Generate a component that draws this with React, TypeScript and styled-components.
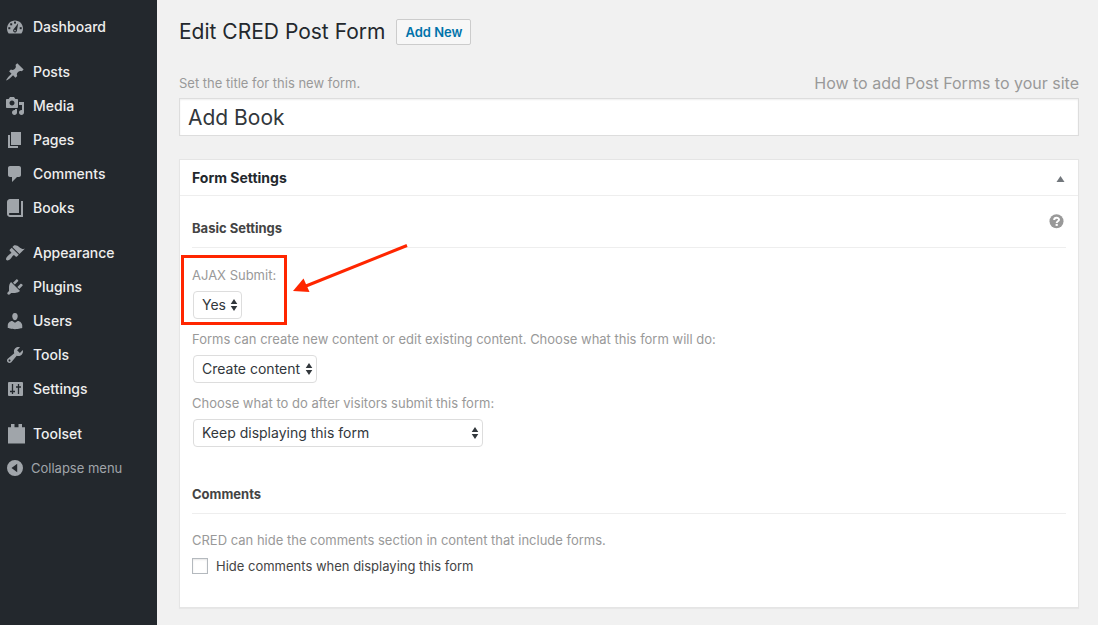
import React from "react";
import styled, { createGlobalStyle } from "styled-components";

const GlobalStyle = createGlobalStyle`
  *, *::before, *::after { box-sizing: border-box; }
  body {
    margin: 0;
    background: #f1f1f1;
    color: #444;
    font-family: Inter, Roboto, sans-serif;
    font-size: 13px;
    line-height: 20px;
  }
`;

const Shell = styled.div`
  display: flex;
  min-height: 100vh;
`;

const Sidebar = styled.nav`
  flex: 0 0 157px;
  padding-top: 10px;
  background: #23282d;
`;

const MenuGroup = styled.ul`
  list-style: none;
  margin: 0 0 11px;
  padding: 0;

  &:last-of-type { margin-bottom: 0; }
`;

const MenuLink = styled.a`
  display: flex;
  align-items: center;
  gap: 8px;
  height: 34px;
  padding-left: 5px;
  color: #eee;
  font-size: 14px;
  font-weight: 500;
  text-decoration: none;
`;

const CollapseButton = styled.button`
  display: flex;
  align-items: center;
  gap: 6px;
  width: 100%;
  height: 34px;
  padding: 0 0 0 5px;
  border: 0;
  background: none;
  color: #a0a5aa;
  font: inherit;
  cursor: pointer;
`;

const IconSvg = styled.svg`
  flex: none;
  width: 20px;
  height: 20px;
  fill: #a0a5aa;
`;

const Main = styled.main`
  flex: 1;
  min-width: 0;
  padding: 16px 19px 17px 22px;
`;

const TitleRow = styled.header`
  display: flex;
  align-items: center;
  gap: 11px;
  height: 32px;
`;

const PageTitle = styled.h1`
  margin: 0;
  color: #23282d;
  font-size: 21px;
  font-weight: 400;
  line-height: 32px;
`;

const AddNew = styled.a`
  height: 26px;
  padding: 0 8px;
  border: 1px solid #ccc;
  border-radius: 2px;
  background: #f7f7f7;
  color: #0073aa;
  font-weight: 600;
  line-height: 24px;
  text-decoration: none;
`;

const TitleHints = styled.div`
  display: flex;
  align-items: center;
  justify-content: space-between;
  height: 30px;
  margin-top: 20px;
  color: #999;
`;

const HelpLink = styled.a`
  color: #999;
  font-size: 16px;
  text-decoration: none;
`;

const TitleInput = styled.input`
  display: block;
  width: 100%;
  height: 38px;
  padding: 0 8px;
  border: 1px solid #ddd;
  border-radius: 0;
  background: #fff;
  box-shadow: inset 0 1px 2px rgba(0, 0, 0, 0.07);
  color: #32373c;
  font: inherit;
  font-size: 21px;
`;

const Panel = styled.section`
  margin-top: 23px;
  border: 1px solid #e5e5e5;
  background: #fff;
  box-shadow: 0 1px 1px rgba(0, 0, 0, 0.04);
`;

const PanelHeader = styled.div`
  display: flex;
  align-items: center;
  justify-content: space-between;
  height: 36px;
  padding: 0 12px;
  border-bottom: 1px solid #eee;
`;

const PanelTitle = styled.h2`
  margin: 0;
  color: #23282d;
  font-size: 14px;
  font-weight: 700;
`;

const IconButton = styled.button`
  display: flex;
  padding: 0;
  border: 0;
  background: none;
  cursor: pointer;
`;

const PanelBody = styled.div`
  padding: 16px 12px 31px;
`;

const SectionHeader = styled.div`
  display: flex;
  align-items: flex-start;
  justify-content: space-between;
  height: 36px;
  margin-bottom: 17px;
  border-bottom: 1px solid #eee;
`;

const SectionTitle = styled.h3`
  margin: 6px 0 0;
  font-size: 13px;
  font-weight: 700;
`;

const Field = styled.div`
  position: relative;
  display: flex;
  flex-direction: column;
  align-items: flex-start;
  gap: 6px;
  margin-bottom: 10px;
`;

const Hint = styled.label`
  color: #999;
`;

const SelectWrap = styled.div<{ $width: number }>`
  position: relative;
  width: ${(p) => p.$width}px;
  margin-left: 1px;
`;

const Select = styled.select`
  appearance: none;
  display: block;
  width: 100%;
  height: 28px;
  padding: 0 0 0 8px;
  border: 1px solid #ddd;
  border-radius: 4px;
  background: #fff;
  color: #32373c;
  font: inherit;
  font-size: 14px;
`;

const SelectArrows = styled.svg`
  position: absolute;
  top: 8px;
  right: 4px;
  width: 8px;
  height: 12px;
  fill: #32373c;
  pointer-events: none;
`;

const Highlight = styled.div`
  position: absolute;
  top: -10px;
  left: -11px;
  width: 106px;
  height: 70px;
  border: 3px solid #ff2600;
  pointer-events: none;
`;

const Arrow = styled.svg`
  position: absolute;
  top: -22px;
  left: 100px;
  width: 118px;
  height: 52px;
  pointer-events: none;
`;

const CommentsSection = styled.div`
  margin-top: 31px;
`;

const Paragraph = styled.p`
  margin: 0 0 7px;
  color: #999;
  line-height: 18px;
`;

const CheckLabel = styled.label`
  display: flex;
  align-items: center;
  gap: 8px;
`;

const Checkbox = styled.input`
  appearance: none;
  width: 16px;
  height: 16px;
  margin: 0;
  border: 1px solid #b4b9be;
  background: #fff;
  box-shadow: inset 0 1px 2px rgba(0, 0, 0, 0.1);
`;

const icons: Record<string, React.ReactNode> = {
  Dashboard: (
    <>
      <path d="M3.7 16.6C2.6 15.200 2 13.500 2 11.600 2 7.200 5.600 3.600 10 3.600s8 3.600 8 8c0 1.900-.6 3.600-1.700 5z" />
      <g fill="#23282d">
        <rect x="9" y="4.600" width="2" height="2" />
        <rect x="5.200" y="6.300" width="2" height="2" />
        <rect x="3.300" y="10.200" width="2" height="2" />
        <rect x="14.700" y="10.200" width="2" height="2" />
        <path d="M13.200 6.200l-1.300 7.600a1.900 1.900 0 1 1-3.300-1.500z" />
      </g>
      <circle cx="10" cy="13.600" r=".8" />
    </>
  ),
  Posts: (
    <path d="M10.440 3.020l1.820-1.820 6.360 6.350-1.830 1.820c-1.050-.68-2.480-.57-3.410.36l-.75.75c-.92.93-1.040 2.350-.35 3.410l-1.830 1.820-2.410-2.410-2.800 2.790c-.42.42-3.380 2.710-3.800 2.290s1.860-3.390 2.280-3.810l2.790-2.790L4.100 9.360l1.830-1.820c1.050.69 2.480.57 3.400-.36l.75-.75c.93-.92 1.050-2.350.36-3.410z" />
  ),
  Media: (
    <path d="M13 11V4c0-.55-.45-1-1-1h-1.670L9 1H5L3.670 3H2c-.55 0-1 .45-1 1v7c0 .55.45 1 1 1h10c.55 0 1-.45 1-1zM7 4.500c1.380 0 2.500 1.120 2.500 2.500S8.380 9.500 7 9.500 4.500 8.380 4.500 7 5.620 4.500 7 4.500zM14 6h5v10.500c0 1.380-1.120 2.500-2.500 2.500S14 17.880 14 16.500s1.120-2.500 2.500-2.500c.17 0 .34.02.5.05V9h-3V6zm-4 8.050V13h2v3.500c0 1.380-1.120 2.500-2.500 2.500S7 17.880 7 16.500 8.120 14 9.500 14c.17 0 .34.02.5.05z" />
  ),
  Pages: <path d="M6 15V2h10v13H6zm-1 1h8v2H3V5h2v11z" />,
  Comments: (
    <path d="M5 2h9c1.100 0 2 .9 2 2v7c0 1.100-.9 2-2 2h-2l-5 5v-5H5c-1.100 0-2-.9-2-2V4c0-1.100.9-2 2-2z" />
  ),
  Books: (
    <path d="M16 3h2v16H5c-1.660 0-3-1.340-3-3V4c0-1.660 1.340-3 3-3h9v14H5c-.55 0-1 .45-1 1s.45 1 1 1h11V3z" />
  ),
  Appearance: (
    <path d="M14.480 11.060L7.410 3.990l1.500-1.500c.5-.56 2.300-.47 3.510.32 1.210.8 1.430 1.280 2.910 2.100 1.180.64 2.450 1.260 4.450.85zm-.71.71L6.700 4.700 4.930 6.470c-.39.39-.39 1.020 0 1.410l1.060 1.060c.39.39.39 1.030 0 1.420-.6.6-1.430 1.110-2.210 1.690-.35.26-.7.53-1.010.84C1.430 14.230.4 16.080 1.400 17.070c.99 1 2.840-.03 4.180-1.360.31-.31.58-.66.85-1.020.57-.78 1.080-1.610 1.690-2.210.39-.39 1.020-.39 1.410 0l1.060 1.060c.39.39 1.020.39 1.410 0z" />
  ),
  Plugins: (
    <path d="M13.110 4.360L9.870 7.600 8 5.730l3.240-3.240c.35-.34 1.050-.2 1.560.32.52.51.66 1.210.31 1.550zm-8 1.770l.91-1.120 9.010 9.010-1.190.84c-.71.71-2.630 1.160-3.820 1.160H6.140L4.900 17.260c-.59.59-1.540.59-2.120 0-.59-.58-.59-1.530 0-2.120l1.240-1.240v-3.880c0-1.130.4-3.190 1.090-3.890zm7.260 3.970l3.240-3.240c.34-.35 1.040-.21 1.550.31.52.51.66 1.210.31 1.550l-3.240 3.250z" />
  ),
  Users: (
    <path d="M10 9.250c-2.270 0-2.730-3.440-2.730-3.440C7 4.020 7.820 2 9.970 2c2.160 0 2.980 2.020 2.710 3.810 0 0-.41 3.440-2.680 3.440zm0 2.570L12.720 10c2.390 0 4.520 2.330 4.520 4.530v2.490s-3.650 1.130-7.240 1.130c-3.650 0-7.240-1.130-7.240-1.130v-2.490c0-2.250 1.940-4.480 4.470-4.480z" />
  ),
  Tools: (
    <path d="M16.680 9.770c-1.340 1.340-3.300 1.670-4.950.99l-5.410 6.520c-.99.99-2.590.99-3.580 0s-.99-2.590 0-3.570l6.520-5.420c-.68-1.650-.35-3.610.99-4.950 1.280-1.280 3.120-1.620 4.720-1.060l-2.890 2.890 2.820 2.820 2.860-2.870c.53 1.580.18 3.390-1.080 4.650zM3.810 16.210c.4.39 1.040.39 1.430 0 .4-.4.4-1.040 0-1.430-.39-.4-1.030-.4-1.430 0-.39.39-.39 1.030 0 1.430z" />
  ),
  Settings: (
    <>
      <rect x="3" y="3" width="15" height="14" rx="1" />
      <path
        d="M7.500 5v10M13.500 5v10M5 12.500h5M11 8h5"
        fill="none"
        stroke="#23282d"
        strokeWidth="1.300"
      />
    </>
  ),
  Toolset: <path d="M3 3.200h3V0h3.500v3.200h4V0H17v3.200h3.300V19.500H3z" />,
};

const menu = [
  ["Dashboard"],
  ["Posts", "Media", "Pages", "Comments", "Books"],
  ["Appearance", "Plugins", "Users", "Tools", "Settings"],
  ["Toolset"],
];

function SelectField(props: {
  id: string;
  label: string;
  value: string;
  options: string[];
  width: number;
  children?: React.ReactNode;
}) {
  return (
    <Field>
      <Hint htmlFor={props.id}>{props.label}</Hint>
      <SelectWrap $width={props.width}>
        <Select id={props.id} defaultValue={props.value}>
          {props.options.map((o) => (
            <option key={o}>{o}</option>
          ))}
        </Select>
        <SelectArrows viewBox="0 0 8 12" aria-hidden="true">
          <path d="M4 0l3.300 5H.7zM4 12L.7 7h6.600z" />
        </SelectArrows>
      </SelectWrap>
      {props.children}
    </Field>
  );
}

export default function App() {
  return (
    <>
      <GlobalStyle />
      <Shell>
        <Sidebar aria-label="Main menu">
          {menu.map((group) => (
            <MenuGroup key={group[0]}>
              {group.map((name) => (
                <li key={name}>
                  <MenuLink href="#">
                    <IconSvg viewBox="0 0 20 20" aria-hidden="true">
                      {icons[name]}
                    </IconSvg>
                    {name}
                  </MenuLink>
                </li>
              ))}
            </MenuGroup>
          ))}
          <CollapseButton type="button">
            <IconSvg viewBox="0 0 20 20" aria-hidden="true">
              <path
                fillRule="evenodd"
                d="M10 2a8 8 0 1 0 0 16a8 8 0 1 0 0-16zM12.200 5.800v8.400L6.500 10z"
              />
            </IconSvg>
            Collapse menu
          </CollapseButton>
        </Sidebar>

        <Main>
          <TitleRow>
            <PageTitle>Edit CRED Post Form</PageTitle>
            <AddNew href="#">Add New</AddNew>
          </TitleRow>
          <TitleHints>
            <label htmlFor="form-title">Set the title for this new form.</label>
            <HelpLink href="#">How to add Post Forms to your site</HelpLink>
          </TitleHints>
          <TitleInput id="form-title" type="text" defaultValue="Add Book" />

          <Panel>
            <PanelHeader>
              <PanelTitle>Form Settings</PanelTitle>
              <IconButton type="button" aria-label="Toggle panel">
                <svg width="10" height="8" viewBox="0 0 10 8">
                  <path d="M4.500 2l4 6h-8z" fill="#72777c" />
                </svg>
              </IconButton>
            </PanelHeader>
            <PanelBody>
              <SectionHeader>
                <SectionTitle>Basic Settings</SectionTitle>
                <IconButton type="button" aria-label="Help">
                  <svg width="18" height="18" viewBox="0 0 18 18">
                    <circle cx="8.500" cy="9.300" r="7" fill="#999" />
                    <path
                      d="M6.200 8c0-3 4.800-2.900 4.800-.3 0 1.600-2.300 1.500-2.300 3.200"
                      fill="none"
                      stroke="#fff"
                      strokeWidth="2"
                    />
                    <rect x="7.600" y="11.900" width="2.200" height="2" fill="#fff" />
                  </svg>
                </IconButton>
              </SectionHeader>

              <SelectField
                id="ajax-submit"
                label="AJAX Submit:"
                value="Yes"
                options={["Yes", "No"]}
                width={49}
              >
                <Highlight />
                <Arrow viewBox="0 0 118 52" aria-hidden="true">
                  <path d="M115 2.500L14 43" stroke="#ff2600" strokeWidth="3" />
                  <path d="M1 48L11.500 35.500 17.500 49z" fill="#ff2600" />
                </Arrow>
              </SelectField>
              <SelectField
                id="form-action"
                label="Forms can create new content or edit existing content. Choose what this form will do:"
                value="Create content"
                options={["Create content", "Edit content"]}
                width={124}
              />
              <SelectField
                id="after-submit"
                label="Choose what to do after visitors submit this form:"
                value="Keep displaying this form"
                options={["Keep displaying this form", "Display a message instead of the form"]}
                width={290}
              />

              <CommentsSection>
                <SectionHeader>
                  <SectionTitle>Comments</SectionTitle>
                </SectionHeader>
                <Paragraph>
                  CRED can hide the comments section in content that include forms.
                </Paragraph>
                <CheckLabel>
                  <Checkbox type="checkbox" />
                  Hide comments when displaying this form
                </CheckLabel>
              </CommentsSection>
            </PanelBody>
          </Panel>
        </Main>
      </Shell>
    </>
  );
}
